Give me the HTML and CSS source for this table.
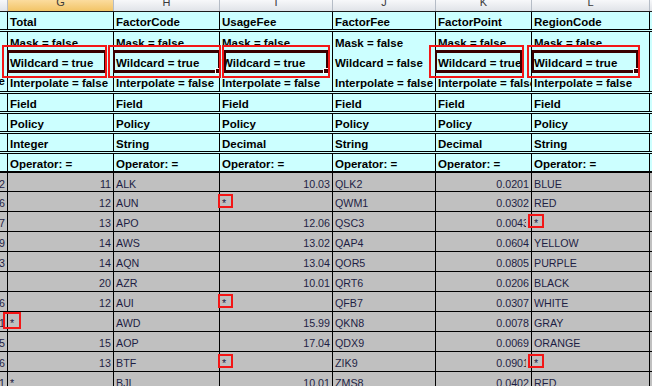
FILE: index.html
```html
<!DOCTYPE html>
<html>
<head>
<meta charset="utf-8">
<link rel="stylesheet" href="styles.css">
</head>
<body>
<div class="sheet">
  <div class="row colhdr">
    <div></div><div class="sel"><span>G</span></div><div><span>H</span></div><div><span>I</span></div><div><span>J</span></div><div><span>K</span></div><div><span>L</span></div><div></div>
  </div>
  <div class="row hdr">
    <div></div><div>Total</div><div>FactorCode</div><div>UsageFee</div><div>FactorFee</div><div>FactorPoint</div><div>RegionCode</div><div></div>
  </div>
  <div class="row hdr flags">
    <div class="ftail"><div></div><div></div><div>Interpolate = false</div></div>
    <div>Mask = false<br>Wildcard = true<br>Interpolate = false</div>
    <div>Mask = false<br>Wildcard = true<br>Interpolate = false</div>
    <div>Mask = false<br>Wildcard = true<br>Interpolate = false</div>
    <div>Mask = false<br>Wildcard = false<br>Interpolate = false</div>
    <div>Mask = false<br>Wildcard = true<br>Interpolate = false</div>
    <div>Mask = false<br>Wildcard = true<br>Interpolate = false</div>
    <div></div>
  </div>
  <div class="row hdr">
    <div></div><div>Field</div><div>Field</div><div>Field</div><div>Field</div><div>Field</div><div>Field</div><div></div>
  </div>
  <div class="row hdr">
    <div></div><div>Policy</div><div>Policy</div><div>Policy</div><div>Policy</div><div>Policy</div><div>Policy</div><div></div>
  </div>
  <div class="row hdr">
    <div></div><div>Integer</div><div>String</div><div>Decimal</div><div>String</div><div>Decimal</div><div>String</div><div></div>
  </div>
  <div class="row hdr op">
    <div></div><div>Operator: =</div><div>Operator: =</div><div>Operator: =</div><div>Operator: =</div><div>Operator: =</div><div>Operator: =</div><div></div>
  </div>

  <div class="row data first">
    <div class="f"><span>2</span></div><div class="n">11</div><div>ALK</div><div class="n">10.03</div><div>QLK2</div><div class="n">0.0201</div><div>BLUE</div><div></div>
  </div>
  <div class="row data">
    <div class="f"><span>6</span></div><div class="n">12</div><div>AUN</div><div>*</div><div>QWM1</div><div class="n">0.0302</div><div>RED</div><div></div>
  </div>
  <div class="row data">
    <div class="f"><span>7</span></div><div class="n">13</div><div>APO</div><div class="n">12.06</div><div>QSC3</div><div class="n">0.0043</div><div>*</div><div></div>
  </div>
  <div class="row data">
    <div class="f"><span>9</span></div><div class="n">14</div><div>AWS</div><div class="n">13.02</div><div>QAP4</div><div class="n">0.0604</div><div>YELLOW</div><div></div>
  </div>
  <div class="row data">
    <div class="f"><span>3</span></div><div class="n">14</div><div>AQN</div><div class="n">13.04</div><div>QOR5</div><div class="n">0.0805</div><div>PURPLE</div><div></div>
  </div>
  <div class="row data">
    <div class="f"><span></span></div><div class="n">20</div><div>AZR</div><div class="n">10.01</div><div>QRT6</div><div class="n">0.0206</div><div>BLACK</div><div></div>
  </div>
  <div class="row data">
    <div class="f"><span>6</span></div><div class="n">12</div><div>AUI</div><div>*</div><div>QFB7</div><div class="n">0.0307</div><div>WHITE</div><div></div>
  </div>
  <div class="row data">
    <div class="f"><span>1</span></div><div>*</div><div>AWD</div><div class="n">15.99</div><div>QKN8</div><div class="n">0.0078</div><div>GRAY</div><div></div>
  </div>
  <div class="row data">
    <div class="f"><span>5</span></div><div class="n">15</div><div>AOP</div><div class="n">17.04</div><div>QDX9</div><div class="n">0.0069</div><div>ORANGE</div><div></div>
  </div>
  <div class="row data">
    <div class="f"><span>6</span></div><div class="n">13</div><div>BTF</div><div>*</div><div>ZIK9</div><div class="n">0.0901</div><div>*</div><div></div>
  </div>
  <div class="row data">
    <div class="f"><span>1</span></div><div>*</div><div>BJI</div><div class="n">10.01</div><div>ZMS8</div><div class="n">0.0402</div><div>RED</div><div></div>
  </div>

  <div class="mk mk-g"></div>
  <div class="mk mk-h"><i></i></div>
  <div class="mk mk-i"><i></i></div>
  <div class="mk mk-k"></div>
  <div class="mk mk-l"><i></i></div>

  <div class="rb rb-g"></div>
  <div class="rb rb-h"></div>
  <div class="rb rb-i"></div>
  <div class="rb rb-k"></div>
  <div class="rb rb-l"></div>

  <div class="sb sb-1"></div>
  <div class="sb sb-2 halo"></div>
  <div class="sb sb-3"></div>
  <div class="sb sb-4"></div>
  <div class="sb sb-5"></div>
  <div class="sb sb-6 halo"></div>
</div>
</body>
</html>
```
FILE: styles.css
```css
html, body {
  margin: 0;
  padding: 0;
  background: #ffffff;
}

.sheet {
  position: relative;
  width: 652px;
  height: 386px;
  overflow: hidden;
  font-family: "Liberation Sans", Arial, sans-serif;
}

.row {
  display: grid;
  grid-template-columns: 8px 106px 106px 113px 103px 96px 118px 2px;
  box-sizing: border-box;
}

.row > div {
  box-sizing: border-box;
  border-right: 1px solid #000;
  overflow: hidden;
  white-space: nowrap;
  padding: 0 2px;
}

.row > div:last-child {
  border-right: 0;
  padding: 0;
}

/* column letters */
.colhdr {
  height: 12px;
  border-bottom: 1px solid #1c1c1c;
  background: linear-gradient(#f7f8fa, #e0e3e8);
}

.colhdr > div {
  border-right-color: #b5bcc6;
  text-align: center;
  font-size: 11px;
  line-height: 11px;
  color: #3a3a3a;
}

.colhdr span {
  display: block;
  margin-top: -3px;
}

.colhdr > .sel {
  background: linear-gradient(#fbdc9e, #f2c466);
}

/* header rows */
.hdr {
  height: 20px;
  background: #ccffff;
  border-bottom: 3px double #000;
  font-weight: bold;
  font-size: 11.5px;
  line-height: 20px;
  color: #000;
}

.hdr > div {
  background: #ccffff;
}

.flags {
  height: 62px;
}

.flags > div {
  padding-top: 1px;
}

.ftail {
  display: flex;
  flex-direction: column;
  align-items: flex-end;
}

.ftail > div {
  height: 20px;
}

.op {
  height: 19px;
  border-bottom: 2px solid #000;
}

/* data rows */
.data {
  height: 20px;
  border-bottom: 1px solid #000;
  background: #c0c0c0;
  font-size: 10.7px;
  line-height: 20px;
  color: #1e1e44;
}

.data.first {
  height: 19px;
}

.data > div {
  background: #c0c0c0;
  padding-top: 1px;
}

.data > .n {
  text-align: right;
}

.data > .f {
  display: flex;
  justify-content: flex-end;
  padding-left: 0;
  padding-right: 2px;
}

/* selection marks around Wildcard lines */
.mk {
  position: absolute;
  top: 50px;
  height: 23px;
  box-sizing: border-box;
  border: 3px solid #3a0000;
  border-left-width: 2px;
  border-right-width: 2px;
}

.mk i {
  position: absolute;
  right: -3px;
  bottom: -4px;
  width: 4px;
  height: 4px;
  background: #3a0000;
  border: 1px solid #ffffff;
}

.mk-g { left: 7px; width: 99px; }
.mk-h { left: 113px; width: 107px; }
.mk-i { left: 224px; width: 104px; }
.mk-k { left: 435px; width: 87px; }
.mk-l { left: 532px; width: 106px; }

/* red annotation boxes */
.rb {
  position: absolute;
  top: 45px;
  height: 33px;
  box-sizing: border-box;
  border: 2px solid #f31616;
}

.rb-g { left: 2px; width: 105px; }
.rb-h { left: 108px; width: 113px; }
.rb-i { left: 222px; width: 108px; }
.rb-k { left: 429px; width: 95px; }
.rb-l { left: 527px; width: 113px; }

.sb {
  position: absolute;
  box-sizing: border-box;
  border: 2px solid #f31616;
  width: 15px;
  height: 14px;
}

.sb.halo {
  box-shadow: -2px 0 0 0 #c0c0c0;
}

.sb-1 { left: 218px; top: 194px; }
.sb-2 { left: 528px; top: 214px; width: 16px; }
.sb-3 { left: 218px; top: 294px; }
.sb-4 { left: 3px; top: 312px; width: 18px; height: 17px; }
.sb-5 { left: 218px; top: 354px; }
.sb-6 { left: 528px; top: 354px; width: 16px; }
```
